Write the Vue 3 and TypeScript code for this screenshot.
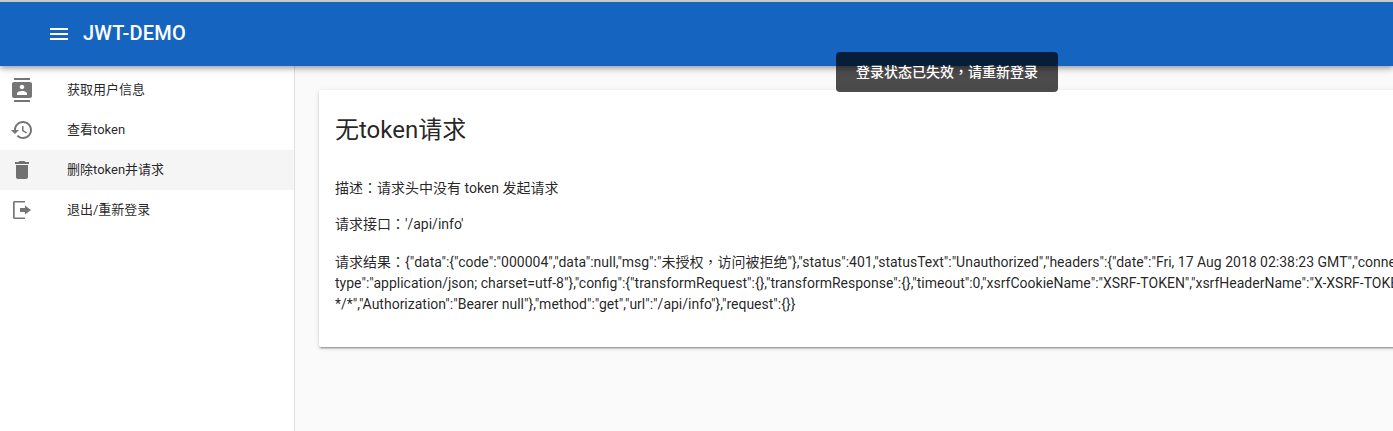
<script setup lang="ts">
interface NavItem {
  label: string
  icon: string
  active?: boolean
}

const items: NavItem[] = [
  {
    label: '获取用户信息',
    icon: 'M20 0H4v2h16V0zM4 24h16v-2H4v2zM20 4H4c-1.1 0-2 .9-2 2v12c0 1.1.9 2 2 2h16c1.1 0 2-.9 2-2V6c0-1.1-.9-2-2-2zm-8 2.75c1.24 0 2.25 1.01 2.25 2.25s-1.01 2.25-2.25 2.25S9.75 10.24 9.75 9 10.76 6.75 12 6.75zM17 17H7v-1.5c0-1.67 3.33-2.5 5-2.5s5 .83 5 2.5V17z'
  },
  {
    label: '查看token',
    icon: 'M13 3c-4.97 0-9 4.03-9 9H1l3.89 3.89.07.14L9 12H6c0-3.87 3.13-7 7-7s7 3.13 7 7-3.13 7-7 7c-1.93 0-3.68-.79-4.94-2.06l-1.42 1.42C8.27 19.99 10.51 21 13 21c4.97 0 9-4.03 9-9s-4.03-9-9-9zm-1 5v5l4.28 2.54.72-1.21-3.5-2.08V8H12z'
  },
  {
    label: '删除token并请求',
    icon: 'M6 19c0 1.1.9 2 2 2h8c1.1 0 2-.9 2-2V7H6v12zM19 4h-3.5l-1-1h-5l-1 1H5v2h14V4z',
    active: true
  },
  {
    label: '退出/重新登录',
    icon: 'M3 4.5C3 3.7 3.7 3 4.5 3H15v1.6H4.7v14.8H15V21H4.5C3.7 21 3 20.3 3 19.5V4.5zM15 7.5l6 4.5-6 4.5V14h-5v-4h5V7.5z'
  }
]

const lines: string[] = [
  '请求结果：{"data":{"code":"000004","data":null,"msg":"未授权，访问被拒绝"},"status":401,"statusText":"Unauthorized","headers":{"date":"Fri, 17 Aug 2018 02:38:23 GMT","connection":"close","content-',
  'type":"application/json; charset=utf-8"},"config":{"transformRequest":{},"transformResponse":{},"timeout":0,"xsrfCookieName":"XSRF-TOKEN","xsrfHeaderName":"X-XSRF-TOKEN","headers":{"Accept":"application/json,',
  '*/*","Authorization":"Bearer null"},"method":"get","url":"/api/info"},"request":{}}'
]

// Full-width punctuation sits centred in the reference, as the Traditional Chinese forms do.
const parts = (text: string): string[] => text.split(/([：，])/)
const isPunct = (part: string): boolean => part === '：' || part === '，'
</script>

<template>
  <div class="page">
    <header class="toolbar">
      <svg class="menu" viewBox="0 0 24 24" width="24" height="24" aria-hidden="true">
        <path d="M3 18h18v-2H3v2zm0-5h18v-2H3v2zm0-7v2h18V6H3z" />
      </svg>
      <span class="title">JWT-DEMO</span>
    </header>
    <div class="body">
      <nav class="drawer">
        <a v-for="item in items" :key="item.label" class="item" :class="{ active: item.active }">
          <svg viewBox="0 0 24 24" width="24" height="24" aria-hidden="true">
            <path :d="item.icon" />
          </svg>
          <span class="label">{{ item.label }}</span>
        </a>
      </nav>
      <main class="main">
        <section class="card">
          <h1>无token请求</h1>
          <p><template v-for="(part, i) in parts('描述：请求头中没有 token 发起请求')" :key="i"><span v-if="isPunct(part)" class="punct">{{ part }}</span><template v-else>{{ part }}</template></template></p>
          <p><template v-for="(part, i) in parts('请求接口：\'/api/info\'')" :key="i"><span v-if="isPunct(part)" class="punct">{{ part }}</span><template v-else>{{ part }}</template></template></p>
          <p class="result">
            <span v-for="line in lines" :key="line" class="line"><template v-for="(part, i) in parts(line)" :key="i"><span v-if="isPunct(part)" class="punct">{{ part }}</span><template v-else>{{ part }}</template></template></span>
          </p>
        </section>
      </main>
    </div>
    <div class="toast"><span><template v-for="(part, i) in parts('登录状态已失效，请重新登录')" :key="i"><span v-if="isPunct(part)" class="punct">{{ part }}</span><template v-else>{{ part }}</template></template></span></div>
  </div>
</template>

<style scoped>
.page {
  position: relative;
  width: 1393px;
  height: 431px;
  overflow: hidden;
  background: #fafafa;
  border-top: 2px solid #c8c8c8;
  box-sizing: border-box;
  font-family: Roboto, "Noto Sans CJK SC", sans-serif;
  font-size: 14px;
  color: rgba(0, 0, 0, 0.87);
}
.punct {
  font-family: "Noto Sans CJK TC", sans-serif;
  line-height: 0;
}
.toolbar {
  position: relative;
  z-index: 2;
  display: flex;
  align-items: center;
  height: 64px;
  padding-left: 47px;
  background: #1565c0;
  color: #fff;
  box-shadow: 0 2px 4px -1px rgba(0, 0, 0, 0.2), 0 4px 5px 0 rgba(0, 0, 0, 0.14), 0 1px 10px 0 rgba(0, 0, 0, 0.12);
}
.menu {
  fill: #fff;
}
.title {
  margin-left: 12px;
  padding-bottom: 2px;
  font-size: 20px;
  font-weight: 500;
  letter-spacing: 0.25px;
}
.body {
  display: flex;
  height: 365px;
}
.drawer {
  flex: none;
  width: 294px;
  padding-top: 4px;
  background: #fff;
  border-right: 1px solid #e0e0e0;
}
.item {
  display: flex;
  align-items: center;
  height: 40px;
  padding-left: 10px;
}
.item svg {
  flex: none;
  margin-right: 33px;
  fill: rgba(0, 0, 0, 0.54);
}
.label {
  padding-bottom: 3px;
  font-size: 13px;
}
.item.active {
  background: rgba(0, 0, 0, 0.04);
}
.main {
  flex: none;
  width: 1200px;
  padding: 24px;
  box-sizing: border-box;
}
.card {
  height: 257px;
  padding: 16px;
  box-sizing: border-box;
  background: #fff;
  border-radius: 2px;
  box-shadow: 0 3px 1px -2px rgba(0, 0, 0, 0.2), 0 2px 2px 0 rgba(0, 0, 0, 0.14), 0 1px 5px 0 rgba(0, 0, 0, 0.12);
}
h1 {
  margin: 0 0 24px;
  font-size: 24px;
  font-weight: 400;
  line-height: 48px;
}
p {
  margin: 0 0 15px;
  line-height: 21px;
  white-space: nowrap;
}
.result {
  margin-top: 17px;
}
.line {
  display: block;
}
.toast {
  position: absolute;
  z-index: 3;
  left: 836px;
  top: 50px;
  width: 222px;
  height: 40px;
  padding-bottom: 2px;
  box-sizing: border-box;
  display: flex;
  align-items: center;
  justify-content: center;
  border-radius: 4px;
  background: rgba(0, 0, 0, 0.7);
  color: #fff;
  font-weight: 500;
}
</style>
